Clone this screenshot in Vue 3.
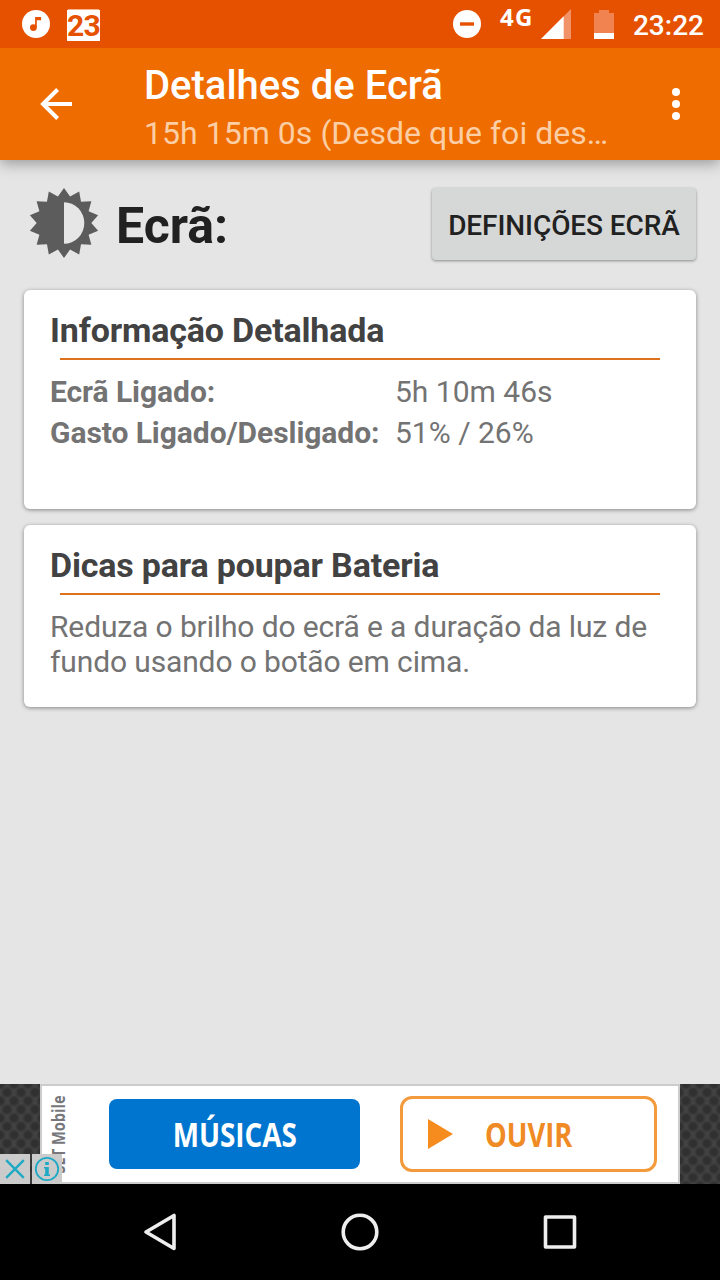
<script setup>
import { ref } from 'vue';

const rows = ref([
    { label: 'Ecrã Ligado:', value: '5h 10m 46s' },
    { label: 'Gasto Ligado/Desligado:', value: '51% / 26%' },
]);

// 14 teeth around the brightness icon
const teeth = 14;
const sunPoints = Array.from({ length: teeth * 2 }, (_, i) => {
    const r = i % 2 ? 27.3 : 35;
    const a = (Math.PI * i) / teeth;
    return `${(36 + r * Math.sin(a)).toFixed(2)},${(36 - r * Math.cos(a)).toFixed(2)}`;
}).join(' ');
</script>
<template>
    <div class="screen">
        <div class="status-bar">
            <svg class="music" width="28" height="28" viewBox="0 0 28 28">
                <circle cx="14" cy="14" r="14" fill="#fff" />
                <circle cx="11.4" cy="17.6" r="3.4" fill="#e65100" />
                <path d="M13.1 7h6v3.2h-4.3v7.4h-1.7z" fill="#e65100" />
            </svg>
            <div class="calendar">23</div>
            <svg class="dnd" width="28" height="28" viewBox="0 0 28 28">
                <circle cx="14" cy="14" r="14" fill="#fff" />
                <path d="M7 14h14" stroke="#e65100" stroke-width="3.4" />
            </svg>
            <span class="network">4G</span>
            <svg class="signal" width="30" height="30" viewBox="0 0 30 30">
                <path d="M0 30L30 0v30z" fill="#f29268" />
                <path d="M0 30L22.7 7.3V30z" fill="#fff" />
            </svg>
            <svg class="battery" width="20" height="29" viewBox="0 0 20 29">
                <path d="M5 0h10v3h5v20H0V3h5z" fill="#f08350" />
                <path d="M0 23h20v6H0z" fill="#fff" />
            </svg>
            <span class="clock">23:22</span>
        </div>

        <header class="toolbar">
            <svg class="back" width="32" height="32" viewBox="0 0 32 32">
                <path d="M32 16H3M17.6 1.5L3 16l14.6 14.5" fill="none" stroke="#fff" stroke-width="4" />
            </svg>
            <div class="titles">
                <h1>Detalhes de Ecrã</h1>
                <p>15h 15m 0s (Desde que foi des…</p>
            </div>
            <svg class="more" width="8" height="32" viewBox="0 0 8 32">
                <circle cx="4" cy="4" r="4" />
                <circle cx="4" cy="16" r="4" />
                <circle cx="4" cy="28" r="4" />
            </svg>
        </header>

        <main class="content">
            <div class="heading">
                <svg width="72" height="72" viewBox="0 0 72 72">
                    <polygon :points="sunPoints" fill="#5c5c5c" />
                    <path d="M36 15.2a20.3 20.8 0 0 1 0 41.6z" fill="#e6e6e6" />
                </svg>
                <h2>Ecrã:</h2>
                <button>DEFINIÇÕES ECRÃ</button>
            </div>

            <section class="card info">
                <h3>Informação Detalhada</h3>
                <hr>
                <div class="row" v-for="row in rows" :key="row.label">
                    <b>{{ row.label }}</b>
                    <span>{{ row.value }}</span>
                </div>
            </section>

            <section class="card tips">
                <h3>Dicas para poupar Bateria</h3>
                <hr>
                <p>Reduza o brilho do ecrã e a duração da luz de fundo usando o botão em cima.</p>
            </section>
        </main>

        <div class="ad">
            <div class="banner">
                <span class="brand">SET Mobile</span>
                <div class="ad-btn blue"><span>MÚSICAS</span></div>
                <div class="ad-btn orange">
                    <svg width="25" height="30" viewBox="0 0 25 30">
                        <path d="M0 0L25 15L0 30z" fill="#f68b1e" />
                    </svg>
                    <span>OUVIR</span>
                </div>
            </div>
            <div class="ad-controls">
                <svg width="30" height="30" viewBox="0 0 30 30">
                    <path d="M6.2 6.2l17.6 17.6M23.8 6.2L6.2 23.8" stroke="#1fa9c4" stroke-width="2.4" />
                </svg>
                <svg width="30" height="30" viewBox="0 0 30 30">
                    <circle cx="15" cy="15" r="11.2" fill="none" stroke="#1fa9c4" stroke-width="1.8" />
                    <path d="M13.2 8h3.6v3h-3.6zM13.2 13h3.6v8.6h-3.6z" fill="#1fa9c4" />
                    <path d="M12 13h3v1.6h-3zM12 20.4h6V22h-6z" fill="#1fa9c4" />
                </svg>
            </div>
        </div>

        <nav class="nav-bar">
            <svg width="36" height="40" viewBox="0 0 36 40">
                <path d="M32 3.5v33L4 20z" />
            </svg>
            <svg width="40" height="40" viewBox="0 0 40 40">
                <circle cx="20" cy="20" r="16.8" />
            </svg>
            <svg width="36" height="40" viewBox="0 0 36 40">
                <rect x="3.5" y="5" width="29" height="30" />
            </svg>
        </nav>
    </div>
</template>
<style>
body {
    margin: 0;
}
</style>
<style scoped>
.screen {
    width: 720px;
    height: 1280px;
    display: flex;
    flex-direction: column;
    overflow: hidden;
    background: #e5e5e5;
    font-family: Roboto, sans-serif;
}

h1,
h2,
h3,
p {
    margin: 0;
    white-space: nowrap;
}

.status-bar {
    position: relative;
    z-index: 2;
    height: 48px;
    flex: none;
    display: flex;
    align-items: center;
    box-sizing: border-box;
    padding: 0 16px 0 22px;
    background: #e65100;
    color: #fff;
}

.calendar {
    width: 33px;
    height: 31px;
    margin: 2px 0 0 17px;
    background: #fff;
    box-shadow: 0 -2px 0 -1px #f6b48c;
    color: #e65100;
    font-size: 30px;
    font-weight: 700;
    line-height: 31px;
    letter-spacing: -0.8px;
    text-align: center;
}

.dnd {
    margin-left: auto;
}

.network {
    margin: -14px 0 0 19px;
    width: 41px;
    font-family: "Noto Sans", sans-serif;
    font-size: 24px;
    font-weight: 700;
    line-height: 28px;
    letter-spacing: 1.2px;
}

.battery {
    margin-left: 23px;
}

.clock {
    margin: 3px 0 0 19px;
    font-size: 28px;
    font-weight: 500;
    line-height: 32px;
}

.toolbar {
    position: relative;
    height: 112px;
    flex: none;
    display: flex;
    align-items: center;
    box-sizing: border-box;
    padding: 0 40px;
    background: #ef6c00;
    box-shadow: 0 3px 14px rgba(0, 0, 0, 0.36);
    color: #fff;
}

.titles {
    flex: 1;
    align-self: flex-start;
    padding: 15px 0 0 72px;
}

.titles h1 {
    font-size: 40px;
    font-weight: 500;
    line-height: 46px;
}

.titles p {
    margin-top: 5px;
    font-size: 32px;
    line-height: 38px;
    letter-spacing: 0.04px;
    color: #fbcea5;
}

.more {
    fill: #fff;
}

.content {
    flex: 1;
    padding: 26px 24px 0;
}

.heading {
    height: 76px;
    display: flex;
    align-items: center;
    padding-left: 4px;
}

.heading svg {
    margin-top: -2px;
}

.heading h2 {
    margin: 4px 0 0 16px;
    font-size: 50px;
    font-weight: 700;
    line-height: 60px;
    color: #212121;
}

.heading button {
    width: 264px;
    height: 72px;
    margin: 0 0 0 auto;
    padding: 2px 0 0;
    border: none;
    border-radius: 4px;
    background: #d6d8d7;
    box-shadow: 0 1px 3px rgba(0, 0, 0, 0.4);
    font-family: inherit;
    font-size: 28px;
    font-weight: 500;
    letter-spacing: -0.08px;
    white-space: nowrap;
    color: #212121;
}

.card {
    box-sizing: border-box;
    padding: 19px 26px 0;
    border-radius: 6px;
    background: #fff;
    box-shadow: 0 1px 4px rgba(0, 0, 0, 0.42);
    font-size: 30px;
    color: #737373;
}

.info {
    height: 219px;
    margin-top: 28px;
}

.tips {
    height: 182px;
    margin-top: 16px;
}

.card h3 {
    font-size: 34px;
    font-weight: 700;
    line-height: 42px;
    letter-spacing: -0.18px;
    color: #424242;
}

.card hr {
    height: 2px;
    margin: 7px 10px 11px;
    border: none;
    background: #dc731b;
}

.row {
    display: flex;
    line-height: 41px;
}

.row b {
    width: 345px;
    letter-spacing: -0.06px;
}

.card p {
    line-height: 35px;
    letter-spacing: -0.13px;
    white-space: normal;
    padding-top: 3px;
}

.ad {
    position: relative;
    height: 100px;
    flex: none;
    padding: 0 40px;
    background-color: #424242;
    background-image: radial-gradient(circle, #303030 3px, transparent 6px),
        radial-gradient(circle, #303030 3px, transparent 6px);
    background-size: 14px 17px;
    background-position: 0 0, 7px 8.5px;
}

.banner {
    height: 100px;
    box-sizing: border-box;
    display: flex;
    align-items: center;
    border: 2px solid #ccc;
    background: #fff;
    font-family: "Open Sans", sans-serif;
    font-weight: 700;
}

.brand {
    width: 26px;
    margin: 0 0 0 4px;
    writing-mode: vertical-rl;
    transform: rotate(180deg) scaleY(0.86);
    font-size: 17px;
    line-height: 26px;
    white-space: nowrap;
    color: #77777b;
}

.ad-btn {
    box-sizing: border-box;
    display: flex;
    align-items: center;
    border-radius: 8px;
    font-size: 34px;
}

.ad-btn span {
    display: block;
    line-height: 40px;
}

.blue {
    width: 251px;
    height: 70px;
    margin-left: 37px;
    justify-content: center;
    background: #0075cf;
    color: #fff;
}

.blue span {
    transform: scaleX(0.82);
}

.orange {
    width: 257px;
    height: 76px;
    margin-left: 40px;
    padding-left: 25px;
    border: 3px solid #f39a3c;
    border-radius: 12px;
    color: #f08a24;
}

.orange span {
    margin-left: 32px;
    transform: scaleX(0.805);
    transform-origin: 0 50%;
}

.ad-controls {
    position: absolute;
    left: 0;
    bottom: 0;
    display: flex;
    gap: 2px;
}

.ad-controls svg {
    background: #cbcbcb;
}

.nav-bar {
    height: 96px;
    flex: none;
    display: flex;
    align-items: center;
    justify-content: space-between;
    box-sizing: border-box;
    padding: 0 142px;
    background: #000;
}

.nav-bar svg {
    fill: none;
    stroke: #eee;
    stroke-width: 3.6;
    stroke-linejoin: round;
}
</style>
